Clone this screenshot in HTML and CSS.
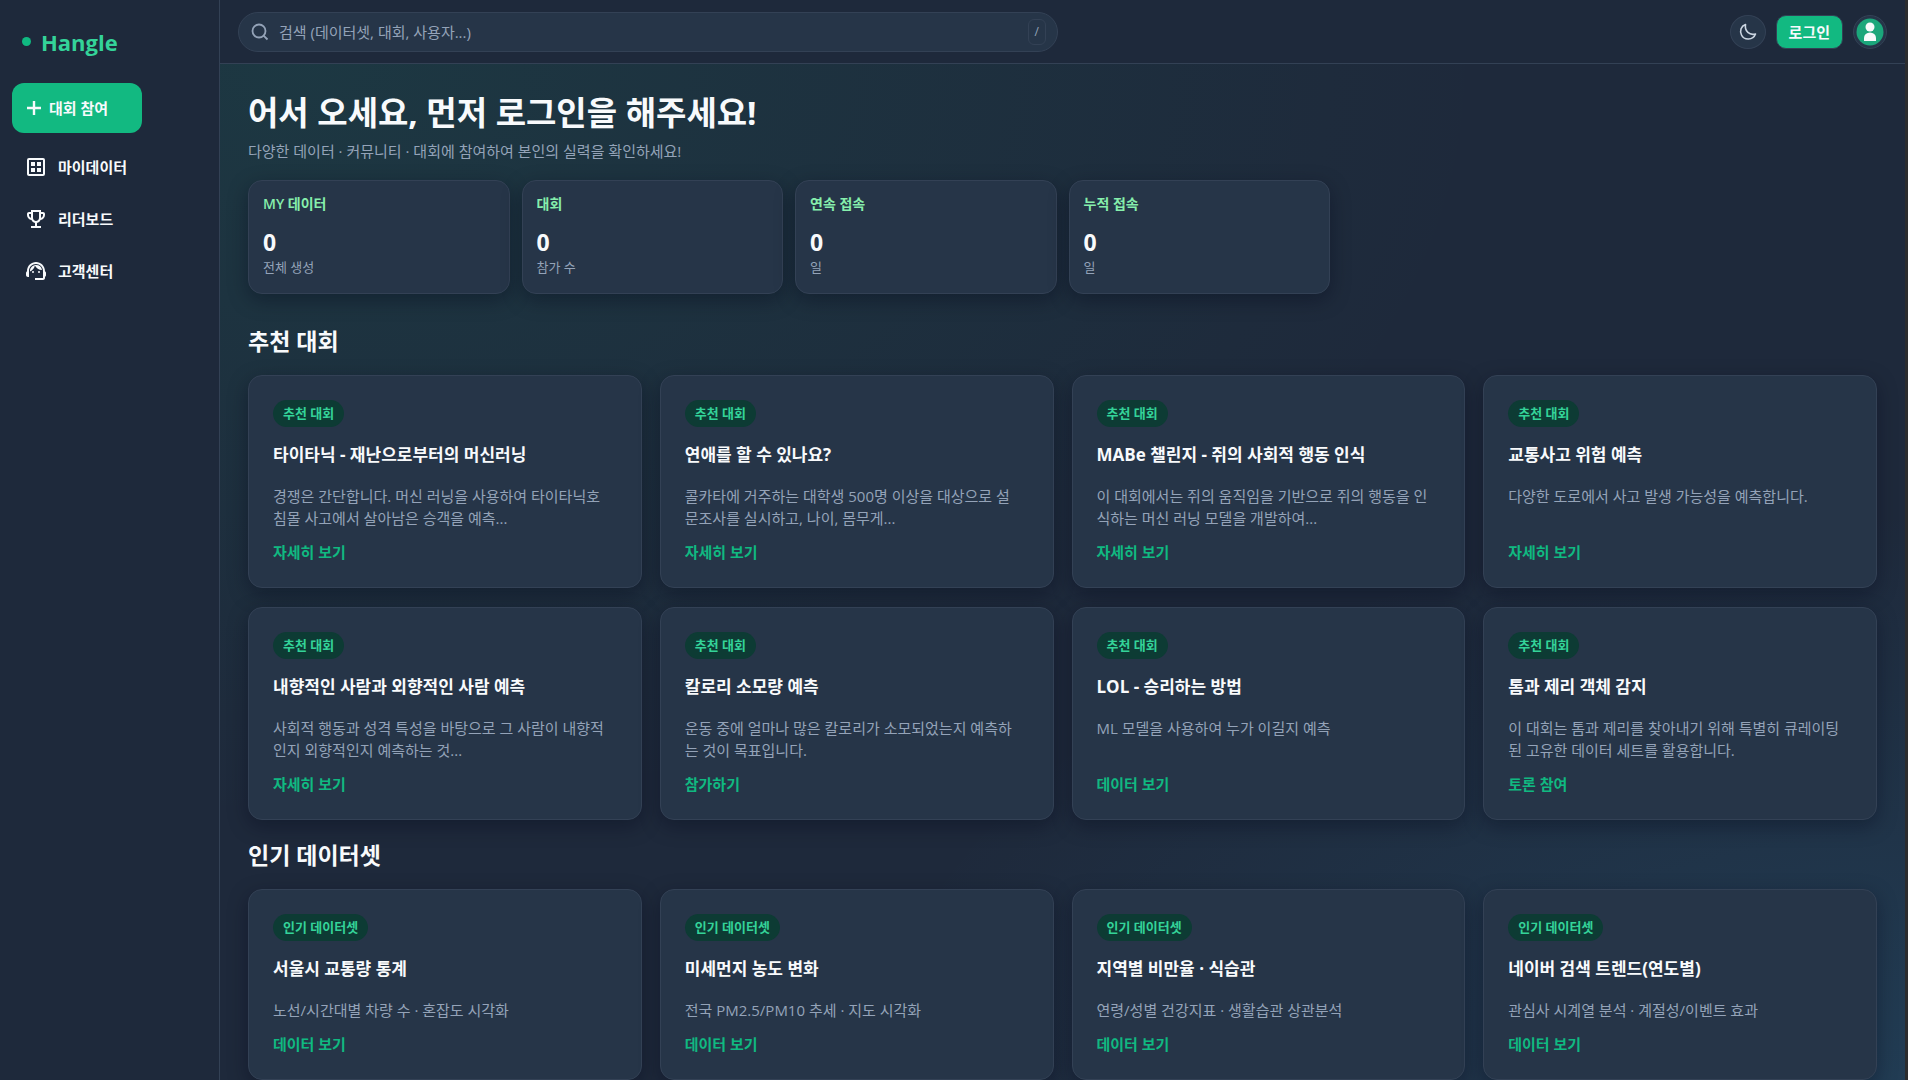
FILE: index.html
```html
<!DOCTYPE html>
<html lang="ko">
<head>
<meta charset="utf-8">
<meta name="viewport" content="width=device-width, initial-scale=1">
<title>Hangle</title>
<link rel="stylesheet" href="styles.css">
</head>
<body>
<div class="app">
  <aside class="sidebar">
    <a class="brand" href="#"><span class="brand-dot"></span>Hangle</a>
    <button class="join" type="button">
      <svg width="18" height="18" viewBox="0 0 18 18" fill="none" stroke="currentColor" stroke-width="2.400"><path d="M9 2v14M2 9h14"/></svg>
      대회 참여
    </button>
    <nav class="nav">
      <a class="nav-link" href="#"><svg width="24" height="24" viewBox="0 0 24 24" fill="currentColor"><path d="M19 3H5a2 2 0 0 0-2 2v14c0 1.100.9 2 2 2h14a2 2 0 0 0 2-2V5a2 2 0 0 0-2-2zm0 16H5V5h14z"/><path d="M7 7h4v4H7zM13 7h4v4h-4zM7 13h4v4H7zM13 13h4v4h-4z"/></svg>마이데이터</a>
      <a class="nav-link" href="#"><svg width="24" height="24" viewBox="0 0 24 24" fill="currentColor"><path d="M19 5h-2V3H7v2H5c-1.100 0-2 .9-2 2v1c0 2.550 1.920 4.630 4.390 4.940A5.010 5.010 0 0 0 11 15.900V19H7v2h10v-2h-4v-3.100a5.010 5.010 0 0 0 3.610-2.960C19.080 12.630 21 10.550 21 8V7c0-1.100-.9-2-2-2zM5 8V7h2v3.820C5.840 10.400 5 9.300 5 8zm7 6c-1.650 0-3-1.350-3-3V5h6v6c0 1.650-1.350 3-3 3zm7-6c0 1.300-.84 2.400-2 2.820V7h2z"/></svg>리더보드</a>
      <a class="nav-link" href="#"><svg width="24" height="24" viewBox="0 0 24 24" fill="currentColor"><path d="M21 12.220C21 6.730 16.740 3 12 3c-4.690 0-9 3.650-9 9.280-.6.340-1 .98-1 1.720v2c0 1.100.9 2 2 2h1v-6.100c0-3.870 3.130-7 7-7s7 3.130 7 7V19h-8v2h8c1.100 0 2-.9 2-2v-1.220c.59-.31 1-.92 1-1.640v-2.300c0-.7-.41-1.310-1-1.620z"/><circle cx="9" cy="13" r="1"/><circle cx="15" cy="13" r="1"/><path d="M18 11.030A6.040 6.040 0 0 0 12.050 6c-3.030 0-6.290 2.510-6.030 6.450a8.075 8.075 0 0 0 4.860-5.890c1.310 2.630 4 4.440 7.120 4.470z"/></svg>고객센터</a>
    </nav>
  </aside>
  <div class="page">
    <header class="topbar">
      <label class="search">
        <svg width="18" height="18" viewBox="0 0 18 18" fill="none" stroke="currentColor" stroke-width="1.800"><circle cx="8" cy="8" r="6.500"/><path d="M12.600 12.600l3.900 3.900"/></svg>
        <input class="search-input" type="search" aria-label="검색" placeholder="검색 (데이터셋, 대회, 사용자...)">
        <kbd class="key">/</kbd>
      </label>
      <div class="actions">
        <button class="round theme" type="button" aria-label="테마"><svg width="18" height="18" viewBox="0 0 18 18" fill="none" stroke="currentColor" stroke-width="1.600" stroke-linejoin="round"><path d="M6.500 1.500C2 3 .5 8 2.500 12c2.500 5.500 11.500 5.500 14-1C10.500 12.500 5.500 8.500 6.500 1.500z"/></svg></button>
        <button class="login" type="button">로그인</button>
        <button class="round" type="button" aria-label="프로필"><svg width="28" height="28" viewBox="0 0 28 28"><circle cx="14" cy="14" r="13.500" fill="#1ba77b"/><circle cx="14" cy="9" r="4.500" fill="#f6fafb"/><path d="M8 23v-3a6 5.500 0 0 1 12 0v3z" fill="#f6fafb"/></svg></button>
      </div>
    </header>
    <main class="main">
      <h1 class="title">어서 오세요, 먼저 로그인을 해주세요!</h1>
      <p class="subtitle">다양한 데이터 · 커뮤니티 · 대회에 참여하여 본인의 실력을 확인하세요!</p>
      <section class="stats">
        <div class="stat"><h3 class="stat-name">MY 데이터</h3><strong class="stat-value">0</strong><span class="stat-unit">전체 생성</span></div>
        <div class="stat"><h3 class="stat-name">대회</h3><strong class="stat-value">0</strong><span class="stat-unit">참가 수</span></div>
        <div class="stat"><h3 class="stat-name">연속 접속</h3><strong class="stat-value">0</strong><span class="stat-unit">일</span></div>
        <div class="stat"><h3 class="stat-name">누적 접속</h3><strong class="stat-value">0</strong><span class="stat-unit">일</span></div>
      </section>
      <h2 class="heading">추천 대회</h2>
      <section class="grid">
        <article class="card"><span class="tag">추천 대회</span><h3 class="card-title">타이타닉 - 재난으로부터의 머신러닝</h3><p class="card-text">경쟁은 간단합니다. 머신 러닝을 사용하여 타이타닉호<br>침몰 사고에서 살아남은 승객을 예측...</p><a class="card-link" href="#">자세히 보기</a></article>
        <article class="card"><span class="tag">추천 대회</span><h3 class="card-title">연애를 할 수 있나요?</h3><p class="card-text">콜카타에 거주하는 대학생 500명 이상을 대상으로 설<br>문조사를 실시하고, 나이, 몸무게...</p><a class="card-link" href="#">자세히 보기</a></article>
        <article class="card"><span class="tag">추천 대회</span><h3 class="card-title">MABe 챌린지 - 쥐의 사회적 행동 인식</h3><p class="card-text">이 대회에서는 쥐의 움직임을 기반으로 쥐의 행동을 인<br>식하는 머신 러닝 모델을 개발하여...</p><a class="card-link" href="#">자세히 보기</a></article>
        <article class="card"><span class="tag">추천 대회</span><h3 class="card-title">교통사고 위험 예측</h3><p class="card-text">다양한 도로에서 사고 발생 가능성을 예측합니다.</p><a class="card-link" href="#">자세히 보기</a></article>
        <article class="card"><span class="tag">추천 대회</span><h3 class="card-title">내향적인 사람과 외향적인 사람 예측</h3><p class="card-text">사회적 행동과 성격 특성을 바탕으로 그 사람이 내향적<br>인지 외향적인지 예측하는 것...</p><a class="card-link" href="#">자세히 보기</a></article>
        <article class="card"><span class="tag">추천 대회</span><h3 class="card-title">칼로리 소모량 예측</h3><p class="card-text">운동 중에 얼마나 많은 칼로리가 소모되었는지 예측하<br>는 것이 목표입니다.</p><a class="card-link" href="#">참가하기</a></article>
        <article class="card"><span class="tag">추천 대회</span><h3 class="card-title">LOL - 승리하는 방법</h3><p class="card-text">ML 모델을 사용하여 누가 이길지 예측</p><a class="card-link" href="#">데이터 보기</a></article>
        <article class="card"><span class="tag">추천 대회</span><h3 class="card-title">톰과 제리 객체 감지</h3><p class="card-text">이 대회는 톰과 제리를 찾아내기 위해 특별히 큐레이팅<br>된 고유한 데이터 세트를 활용합니다.</p><a class="card-link" href="#">토론 참여</a></article>
      </section>
      <h2 class="heading">인기 데이터셋</h2>
      <section class="grid">
        <article class="card"><span class="tag">인기 데이터셋</span><h3 class="card-title">서울시 교통량 통계</h3><p class="card-text">노선/시간대별 차량 수 · 혼잡도 시각화</p><a class="card-link" href="#">데이터 보기</a></article>
        <article class="card"><span class="tag">인기 데이터셋</span><h3 class="card-title">미세먼지 농도 변화</h3><p class="card-text">전국 PM2.5/PM10 추세 · 지도 시각화</p><a class="card-link" href="#">데이터 보기</a></article>
        <article class="card"><span class="tag">인기 데이터셋</span><h3 class="card-title">지역별 비만율 · 식습관</h3><p class="card-text">연령/성별 건강지표 · 생활습관 상관분석</p><a class="card-link" href="#">데이터 보기</a></article>
        <article class="card"><span class="tag">인기 데이터셋</span><h3 class="card-title">네이버 검색 트렌드(연도별)</h3><p class="card-text">관심사 시계열 분석 · 계절성/이벤트 효과</p><a class="card-link" href="#">데이터 보기</a></article>
      </section>
    </main>
  </div>
</div>
</body>
</html>
```

FILE: styles.css
```css
* { box-sizing: border-box; }

body {
  margin: 0;
  height: 100vh;
  overflow: hidden;
  background: #1e293b;
  color: #f8fafc;
  font: 15px/22px "Open Sans", "Noto Sans CJK KR", sans-serif;
}
a { color: inherit; text-decoration: none; }
button, input { font: inherit; color: inherit; }
button { cursor: pointer; }
svg { display: block; flex: none; }
h1, h2, h3, p { margin: 0; }

.app {
  display: grid;
  grid-template-columns: 220px minmax(0, 1fr);
  height: 100vh;
  border-right: 3px solid #2b2c2e;
}

.sidebar {
  padding: 28px 12px;
  border-right: 1px solid #334155;
}
.brand {
  display: flex;
  align-items: center;
  gap: 10px;
  height: 28px;
  padding-left: 10px;
  color: #34d399;
  font-size: 22px;
  font-weight: 700;
}
.brand-dot {
  width: 9px;
  height: 9px;
  margin-bottom: 2px;
  border-radius: 50%;
  background: #10b981;
}
.join {
  display: flex;
  align-items: center;
  gap: 6px;
  width: 130px;
  height: 50px;
  margin-top: 27px;
  padding: 0 13px;
  border: 0;
  border-radius: 12px;
  background: #12b981;
  font-weight: 600;
}
.nav {
  display: grid;
  gap: 8px;
  margin-top: 12px;
}
.nav-link {
  display: flex;
  align-items: center;
  gap: 10px;
  height: 44px;
  padding: 0 12px;
  font-weight: 600;
}

.page {
  display: flex;
  flex-direction: column;
  min-height: 0;
}
.topbar {
  display: flex;
  flex: none;
  align-items: center;
  justify-content: space-between;
  height: 64px;
  padding: 0 18px;
  border-bottom: 1px solid #334155;
}
.search {
  display: flex;
  align-items: center;
  gap: 10px;
  width: 820px;
  height: 40px;
  padding: 0 11px 0 12px;
  border: 1px solid #334155;
  border-radius: 20px;
  background: #263548;
  color: #94a3b8;
}
.search-input {
  flex: 1;
  min-width: 0;
  padding: 0;
  border: 0;
  outline: 0;
  background: none;
}
.search-input::placeholder { color: #94a3b8; }
.key {
  padding: 0 6px;
  border: 1px solid #334155;
  border-radius: 6px;
  font: 12px/24px "Open Sans", sans-serif;
}
.actions {
  display: flex;
  align-items: center;
  gap: 10px;
}
.round {
  display: grid;
  place-items: center;
  width: 34px;
  height: 34px;
  padding: 0;
  border: 1px solid #334155;
  border-radius: 50%;
  background: #263548;
  color: #cbd5e1;
}
.theme { width: 36px; }
.login {
  height: 34px;
  padding: 0 12px;
  border: 1px solid #334155;
  border-radius: 10px;
  background: #12b981;
  font-weight: 600;
}

.main {
  flex: 1;
  min-height: 0;
  padding: 28px;
  overflow: hidden;
  background:
    radial-gradient(1250px 800px at 5% 0%, rgba(16, 185, 129, .1), transparent 95%),
    radial-gradient(1100px 600px at 100% 100%, rgba(56, 189, 248, .13), transparent 95%),
    #1e293b;
}
.title {
  font-size: 33px;
  line-height: 42px;
}
.subtitle {
  margin-top: 6px;
  color: #94a3b8;
}
.stats {
  display: grid;
  grid-template-columns: repeat(4, 1fr);
  gap: 12px;
  max-width: 1082px;
  margin-top: 18px;
}
.stat, .card {
  display: flex;
  flex-direction: column;
  border: 1px solid #334155;
  border-radius: 14px;
  background: #263548;
  box-shadow: 0 6px 20px rgba(2, 6, 23, .35);
}
.stat { padding: 14px; min-height: 114px; }
.stat-name {
  color: #86efac;
  font-size: 14px;
  line-height: 18px;
  font-weight: 600;
}
.stat-value {
  margin-top: 14px;
  font-size: 23px;
  line-height: 30px;
}
.stat-unit {
  color: #94a3b8;
  font-size: 13px;
  line-height: 20px;
}
.heading {
  padding: 32px 0 18px;
  font-size: 23px;
  line-height: 31px;
}
.grid {
  display: grid;
  grid-template-columns: repeat(4, minmax(0, 1fr));
  gap: 19px 18px;
}
.grid + .heading { padding-top: 20px; }
.card { padding: 24px; }
.tag {
  align-self: flex-start;
  padding: 4px 10px;
  border-radius: 14px;
  background: #0d3b34;
  color: #34d399;
  font-size: 13px;
  line-height: 19px;
  font-weight: 600;
}
.card-title {
  margin-top: 16px;
  font-size: 17px;
  line-height: 24px;
}
.card-text {
  flex: 1;
  margin-top: 18px;
  color: #94a3b8;
  white-space: nowrap;
}
.card-link {
  margin-top: 12px;
  color: #10b981;
  font-weight: 600;
}
```
